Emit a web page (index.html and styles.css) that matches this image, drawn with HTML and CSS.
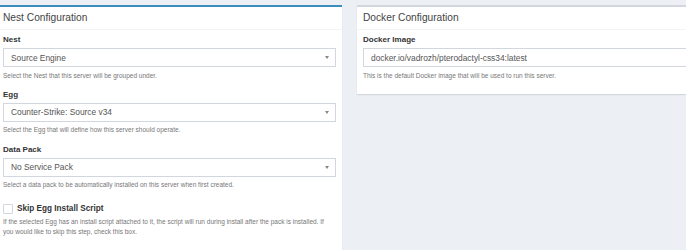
FILE: index.html
```html
<!DOCTYPE html>
<html>
<head>
<meta charset="utf-8">
<link rel="stylesheet" href="styles.css">
</head>
<body>
<div class="page">
  <div class="box box-primary box-tall">
    <div class="box-header"><h3 class="box-title">Nest Configuration</h3></div>
    <div class="box-body">
      <div class="form-group">
        <label class="label">Nest</label>
        <div class="select"><span>Source Engine</span><i class="caret"></i></div>
        <p class="help">Select the Nest that this server will be grouped under.</p>
      </div>
      <div class="form-group">
        <label class="label">Egg</label>
        <div class="select"><span>Counter-Strike: Source v34</span><i class="caret"></i></div>
        <p class="help">Select the Egg that will define how this server should operate.</p>
      </div>
      <div class="form-group">
        <label class="label">Data Pack</label>
        <div class="select"><span>No Service Pack</span><i class="caret"></i></div>
        <p class="help">Select a data pack to be automatically installed on this server when first created.</p>
      </div>
      <div class="form-group check-group">
        <div class="check-row"><span class="checkbox"></span><label class="check-label">Skip Egg Install Script</label></div>
        <p class="help">If the selected Egg has an install script attached to it, the script will run during install after the pack is installed. If you would like to skip this step, check this box.</p>
      </div>
    </div>
  </div>
  <div class="box box-default">
    <div class="box-header"><h3 class="box-title">Docker Configuration</h3></div>
    <div class="box-body">
      <div class="form-group">
        <label class="label">Docker Image</label>
        <div class="input">docker.io/vadrozh/pterodactyl-css34:latest</div>
        <p class="help">This is the default Docker image that will be used to run this server.</p>
      </div>
    </div>
  </div>
</div>
</body>
</html>
```

FILE: styles.css
```css
html, body {
  margin: 0;
  padding: 0;
}
body {
  background: #ecf0f5;
  font-family: "Liberation Sans", Arial, sans-serif;
  color: #333;
  overflow: hidden;
  width: 686px;
  height: 250px;
}
.page {
  display: flex;
  align-items: flex-start;
  gap: 15px;
  margin-left: -3px;
  padding-top: 5px;
}
.box {
  flex: none;
  width: 345px;
  background: #fff;
  border-top: 2px solid #d2d6de;
  box-shadow: 0 1px 1px rgba(0, 0, 0, 0.1);
}
.box-primary {
  border-top-color: #3c8dbc;
}
.box-tall {
  min-height: 270px;
}
.box-header {
  padding: 5px 6px 5px;
  border-bottom: 1px solid #f4f4f4;
}
.box-title {
  margin: 0;
  font-size: 10.2px;
  line-height: 12px;
  font-weight: normal;
  color: #444;
}
.box-body {
  padding: 5px 6px 4px;
}
.form-group {
  margin-bottom: 10px;
}
.label {
  display: block;
  font-size: 8px;
  line-height: 10px;
  font-weight: bold;
  color: #333;
  margin-bottom: 3px;
}
.select, .input {
  box-sizing: border-box;
  height: 19px;
  border: 1px solid #d2d6de;
  background: #fff;
  display: flex;
  align-items: center;
  justify-content: space-between;
  padding: 0 6px 0 7px;
  font-size: 8.4px;
  color: #555;
}
.input {
  width: 400px;
}
.caret {
  width: 0;
  height: 0;
  border-style: solid;
  border-width: 3px 2.5px 0 2.5px;
  border-color: #888 transparent transparent transparent;
}
.help {
  margin: 3.5px 0 0;
  font-size: 6.5px;
  line-height: 9.4px;
  color: #777;
}
.check-group {
  padding-top: 4px;
}
.check-row {
  display: flex;
  align-items: center;
  gap: 4px;
  margin-bottom: 1px;
}
.checkbox {
  box-sizing: border-box;
  width: 10px;
  height: 10px;
  border: 1px solid #d2d6de;
  border-radius: 1px;
  background: #fff;
}
.check-label {
  font-size: 8.2px;
  line-height: 10px;
  font-weight: bold;
  color: #333;
}
```
